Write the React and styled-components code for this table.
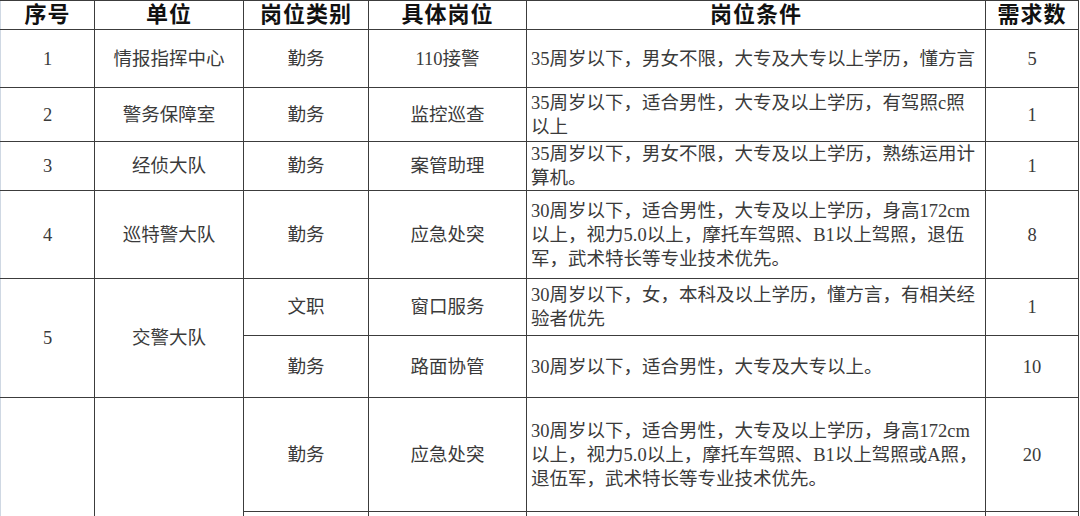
import React from "react";
import styled, { createGlobalStyle } from "styled-components";

const Global = createGlobalStyle`
  html, body { margin: 0; padding: 0; background: #ffffff; }
  body { font-family: "Liberation Serif", "Noto Sans CJK SC", serif; }
`;

const Sheet = styled.div`
  width: 1080px;
  height: 516px;
  overflow: hidden;
  background: #ffffff;
`;

const Table = styled.table`
  border-collapse: collapse;
  table-layout: fixed;
  width: 1078px;
  font-family: "Liberation Serif", "Noto Sans CJK SC", serif;
  color: #3a3a3a;
`;

const Row = styled.tr`
  height: ${(p) => p.$h}px;
`;

const HeadCell = styled.th`
  border: 1px solid #3c3c3c;
  padding: 0;
  font-size: 22px;
  font-weight: 700;
  color: #111111;
  text-align: center;
  vertical-align: middle;
  line-height: 26px;
  letter-spacing: 1px;
  &:first-child { border-left-color: #cfd8e3; }
`;

const Cell = styled.td`
  border: 1px solid #3c3c3c;
  padding: ${(p) => (p.$left ? "0 0 0 4px" : "0")};
  font-size: 18.5px;
  line-height: 24px;
  text-align: ${(p) => (p.$left ? "left" : "center")};
  vertical-align: middle;
  white-space: nowrap;
  &:first-child { border-left-color: #cfd8e3; }
`;

const Line = styled.span`
  display: block;
  white-space: nowrap;
`;

const cols = [94, 149, 125, 158, 459, 93];

const Cond = ({ lines }) => (
  <Cell $left>
    {lines.map((l, i) => (
      <Line key={i}>{l}</Line>
    ))}
  </Cell>
);

export default function App() {
  return (
    <Sheet>
      <Global />
      <Table>
        <colgroup>
          {cols.map((w, i) => (
            <col key={i} style={{ width: w }} />
          ))}
        </colgroup>
        <tbody>
          <Row $h={29}>
            <HeadCell>序号</HeadCell>
            <HeadCell>单位</HeadCell>
            <HeadCell>岗位类别</HeadCell>
            <HeadCell>具体岗位</HeadCell>
            <HeadCell>岗位条件</HeadCell>
            <HeadCell>需求数</HeadCell>
          </Row>
          <Row $h={58}>
            <Cell>1</Cell>
            <Cell>情报指挥中心</Cell>
            <Cell>勤务</Cell>
            <Cell>110接警</Cell>
            <Cond lines={["35周岁以下，男女不限，大专及大专以上学历，懂方言"]} />
            <Cell>5</Cell>
          </Row>
          <Row $h={54}>
            <Cell>2</Cell>
            <Cell>警务保障室</Cell>
            <Cell>勤务</Cell>
            <Cell>监控巡查</Cell>
            <Cond lines={["35周岁以下，适合男性，大专及以上学历，有驾照c照", "以上"]} />
            <Cell>1</Cell>
          </Row>
          <Row $h={47}>
            <Cell>3</Cell>
            <Cell>经侦大队</Cell>
            <Cell>勤务</Cell>
            <Cell>案管助理</Cell>
            <Cond lines={["35周岁以下，男女不限，大专及以上学历，熟练运用计", "算机。"]} />
            <Cell>1</Cell>
          </Row>
          <Row $h={88}>
            <Cell>4</Cell>
            <Cell>巡特警大队</Cell>
            <Cell>勤务</Cell>
            <Cell>应急处突</Cell>
            <Cond
              lines={[
                "30周岁以下，适合男性，大专及以上学历，身高172cm",
                "以上，视力5.0以上，摩托车驾照、B1以上驾照，退伍",
                "军，武术特长等专业技术优先。",
              ]}
            />
            <Cell>8</Cell>
          </Row>
          <Row $h={57}>
            <Cell rowSpan={2}>5</Cell>
            <Cell rowSpan={2}>交警大队</Cell>
            <Cell>文职</Cell>
            <Cell>窗口服务</Cell>
            <Cond lines={["30周岁以下，女，本科及以上学历，懂方言，有相关经", "验者优先"]} />
            <Cell>1</Cell>
          </Row>
          <Row $h={62}>
            <Cell>勤务</Cell>
            <Cell>路面协管</Cell>
            <Cond lines={["30周岁以下，适合男性，大专及大专以上。"]} />
            <Cell>10</Cell>
          </Row>
          <Row $h={114}>
            <Cell rowSpan={2}></Cell>
            <Cell rowSpan={2}></Cell>
            <Cell>勤务</Cell>
            <Cell>应急处突</Cell>
            <Cond
              lines={[
                "30周岁以下，适合男性，大专及以上学历，身高172cm",
                "以上，视力5.0以上，摩托车驾照、B1以上驾照或A照，",
                "退伍军，武术特长等专业技术优先。",
              ]}
            />
            <Cell>20</Cell>
          </Row>
          <Row $h={60}>
            <Cell></Cell>
            <Cell></Cell>
            <Cell></Cell>
            <Cell></Cell>
          </Row>
        </tbody>
      </Table>
    </Sheet>
  );
}
